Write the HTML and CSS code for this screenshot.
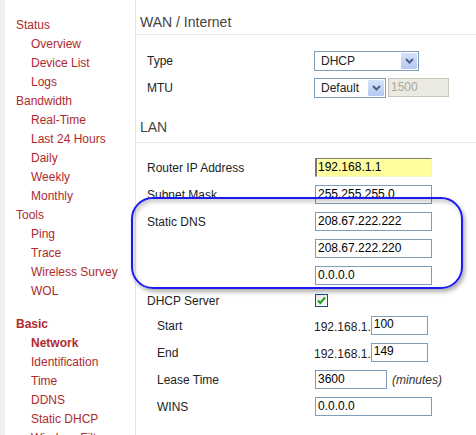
FILE: index.html
```html
<!DOCTYPE html>
<html lang="en">

<head>
    <meta charset="UTF-8">
    <title>Basic Network</title>
    <link rel="stylesheet" href="styles.css">
</head>

<body>
    <div class="page">
        <!-- Menu -->
        <div class="menu">
            <div class="group">Status</div>
            <div class="item">Overview</div>
            <div class="item">Device List</div>
            <div class="item">Logs</div>
            <div class="group">Bandwidth</div>
            <div class="item">Real-Time</div>
            <div class="item">Last 24 Hours</div>
            <div class="item">Daily</div>
            <div class="item">Weekly</div>
            <div class="item">Monthly</div>
            <div class="group">Tools</div>
            <div class="item">Ping</div>
            <div class="item">Trace</div>
            <div class="item">Wireless Survey</div>
            <div class="item">WOL</div>
            <div class="group spaced active">Basic</div>
            <div class="item active">Network</div>
            <div class="item">Identification</div>
            <div class="item">Time</div>
            <div class="item">DDNS</div>
            <div class="item">Static DHCP</div>
            <div class="item">Wireless Filter</div>
        </div>

        <!-- Settings -->
        <div class="content">
            <div class="section-title">WAN / Internet</div>
            <div class="rows">
                <div class="row">
                    <div class="label">Type</div>
                    <div class="field">
                        <div class="select wide">
                            <span class="select-text">DHCP</span>
                            <span class="arrow"><svg width="9" height="6" viewBox="0 0 9 6"><path d="M1 1 L4.5 4.5 L8 1" fill="none" stroke="#4d6185" stroke-width="2"/></svg></span>
                        </div>
                    </div>
                </div>
                <div class="row">
                    <div class="label">MTU</div>
                    <div class="field">
                        <div class="select narrow">
                            <span class="select-text">Default</span>
                            <span class="arrow"><svg width="9" height="6" viewBox="0 0 9 6"><path d="M1 1 L4.5 4.5 L8 1" fill="none" stroke="#4d6185" stroke-width="2"/></svg></span>
                        </div>
                        <div class="input mtu disabled">1500</div>
                    </div>
                </div>
            </div>

            <div class="section-title lan">LAN</div>
            <div class="rows lan-rows">
                <div class="row">
                    <div class="label">Router IP Address</div>
                    <div class="field"><div class="input focused">192.168.1.1</div></div>
                </div>
                <div class="row">
                    <div class="label">Subnet Mask</div>
                    <div class="field"><div class="input">255.255.255.0</div></div>
                </div>
                <div class="row">
                    <div class="label">Static DNS</div>
                    <div class="field"><div class="input">208.67.222.222</div></div>
                </div>
                <div class="row">
                    <div class="label"></div>
                    <div class="field"><div class="input">208.67.222.220</div></div>
                </div>
                <div class="row">
                    <div class="label"></div>
                    <div class="field"><div class="input">0.0.0.0</div></div>
                </div>
                <div class="row short">
                    <div class="label">DHCP Server</div>
                    <div class="field">
                        <span class="checkbox"><svg width="11" height="11" viewBox="0 0 11 11"><path d="M2 5.5 L4.3 8 L9 2.5" fill="none" stroke="#21a121" stroke-width="2"/></svg></span>
                    </div>
                </div>
                <div class="row sub">
                    <div class="label">Start</div>
                    <div class="field"><span class="prefix">192.168.1.</span><div class="input octet">100</div></div>
                </div>
                <div class="row sub">
                    <div class="label">End</div>
                    <div class="field"><span class="prefix">192.168.1.</span><div class="input octet">149</div></div>
                </div>
                <div class="row sub">
                    <div class="label">Lease Time</div>
                    <div class="field"><div class="input lease">3600</div><span class="note">(minutes)</span></div>
                </div>
                <div class="row sub">
                    <div class="label">WINS</div>
                    <div class="field"><div class="input">0.0.0.0</div></div>
                </div>
            </div>
        </div>

        <!-- Annotation round the DNS fields -->
        <div class="highlight"></div>
    </div>
</body>

</html>
```

FILE: styles.css
```css
/* General Styles */
body {
    margin: 0;
    padding: 0;
    background-color: #fff;
    font-family: "Liberation Sans", Arial, sans-serif;
    font-size: 12px;
    color: #222;
}

.page {
    position: relative;
    display: flex;
    height: 435px;
    overflow: hidden;
    padding-left: 5px;
    background-color: #f0f0f0;
}

/* Menu Styles */
.menu {
    width: 131px;
    flex-shrink: 0;
    background-color: #fff;
    border-right: 1px solid #e4e4e4;
    padding: 16px 0 0 11px;
    box-sizing: border-box;
    color: #b0292e;
    line-height: 19px;
}

.menu .item {
    padding-left: 15px;
}

.menu .spaced {
    margin-top: 14px;
}

.menu .active {
    font-weight: bold;
}

/* Content Styles */
.content {
    flex: 1;
    background-color: #fff;
}

.section-title {
    font-size: 14px;
    line-height: 17px;
    color: #444;
    padding: 14px 0 3px 4px;
    border-bottom: 1px solid #e6e6e6;
}

.section-title.lan {
    margin-top: 18px;
    padding-top: 0;
    padding-bottom: 6px;
}

.rows {
    padding: 12px 0 0 11px;
}

.lan-rows {
    padding-top: 11px;
}

.row {
    display: grid;
    grid-template-columns: 168px 1fr;
    align-items: center;
    height: 27px;
}

.row.short {
    height: 23px;
}

.row.sub .label {
    padding-left: 10px;
}

.field {
    display: flex;
    align-items: center;
}

/* Fields */
.select {
    display: flex;
    align-items: center;
    justify-content: space-between;
    height: 20px;
    box-sizing: border-box;
    border: 1px solid #7f9db9;
    background-color: #fff;
    margin-left: -1px;
}

.select.wide {
    width: 105px;
}

.select.narrow {
    width: 72px;
}

.select-text {
    padding-left: 6px;
}

.arrow {
    display: flex;
    align-items: center;
    justify-content: center;
    width: 16px;
    height: 16px;
    margin-right: 1px;
    background: linear-gradient(#d6e2fb, #b4c8f3);
    border-radius: 1px;
}

.input {
    width: 117px;
    height: 19px;
    box-sizing: border-box;
    border: 1px solid #7f9db9;
    padding: 0 0 0 2px;
    line-height: 16px;
    font-size: 12px;
    color: #000;
    background-color: #fff;
    white-space: nowrap;
}

.input.focused {
    background-color: #ffffa0;
    border-color: #7a7a7a #f4f4c8 #f4f4c8 #7a7a7a;
    border-width: 1px 1px 1px 2px;
    padding-left: 1px;
}

.input.disabled {
    background-color: #ebebe4;
    border-color: #c9c7ba;
    color: #aca899;
}

.input.mtu {
    width: 61px;
    margin-left: 2px;
}

.input.octet {
    width: 57px;
    line-height: 14px;
}

.input.lease {
    width: 72px;
}

.prefix {
    margin-left: -1px;
    margin-top: 3px;
}

.note {
    font-style: italic;
    margin-left: 5px;
    color: #333;
}

.checkbox {
    display: flex;
    align-items: center;
    justify-content: center;
    width: 13px;
    height: 13px;
    box-sizing: border-box;
    border: 1px solid #1c5180;
    background: linear-gradient(135deg, #e6e6e0, #fff);
}

/* Annotation */
.highlight {
    position: absolute;
    left: 131px;
    top: 197px;
    width: 332px;
    height: 92px;
    box-sizing: border-box;
    border: 2px solid #1a1af5;
    border-radius: 22px;
    box-shadow: 2px 3px 4px rgba(0, 0, 0, 0.32), inset 2px 3px 4px rgba(0, 0, 0, 0.2);
}
```
